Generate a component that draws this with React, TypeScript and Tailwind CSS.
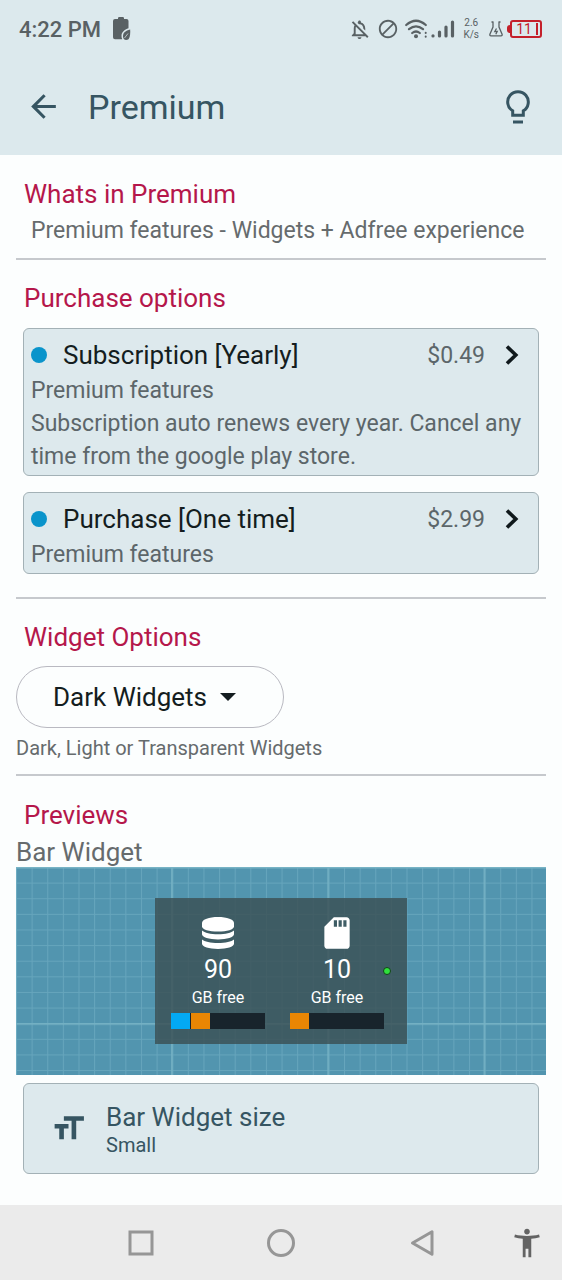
import { useState, type ReactNode } from "react";
import {
  MdAccessibilityNew,
  MdArrowBack,
  MdBlock,
  MdFormatSize,
  MdOutlineNotificationsOff,
  MdSdCard,
} from "react-icons/md";

type PurchaseOption = {
  id: string;
  title: string;
  price: string;
  lines: string[];
};

type Segment = { color: string; percent: number };

const PURCHASE_OPTIONS: PurchaseOption[] = [
  {
    id: "yearly",
    title: "Subscription [Yearly]",
    price: "$0.49",
    lines: [
      "Premium features",
      "Subscription auto renews every year. Cancel any time from the google play store.",
    ],
  },
  {
    id: "one-time",
    title: "Purchase [One time]",
    price: "$2.99",
    lines: ["Premium features"],
  },
];

const INTERNAL_USAGE: Segment[] = [
  { color: "#03a9f4", percent: 20 },
  { color: "#e98604", percent: 20 },
];

const SD_CARD_USAGE: Segment[] = [{ color: "#e98604", percent: 20 }];

function BatterySaverIcon() {
  return (
    <svg width="18" height="24" viewBox="0 0 18 24" fill="#596164" aria-hidden="true">
      <path d="M5 2V1.2Q5 0 6.2 0h3.6Q11 0 11 1.2V2h2.5Q15.500 2 15.500 4v7.2C11.500 12.500 8.500 15 8.500 19c0 1.200.2 2.200.8 3.200H2Q0 22.200 0 20.200V4Q0 2 2 2Z" />
      <path d="M17.200 12.500C12.500 13.500 10 15.800 10 19.200c0 2.300 1.200 3.800 3.200 3.800 3 0 4.300-3 4-10.500Z" />
      <path d="M11.500 21 15 16.500" stroke="#dce9ed" strokeWidth="0.700" />
    </svg>
  );
}

function WifiIcon() {
  return (
    <svg width="24" height="20" viewBox="0 0 24 20" fill="none" stroke="#596164" strokeLinecap="round" aria-hidden="true">
      <path d="M1.200 6Q11 -2.500 20.800 6M4 10.200q7-5.800 14 0M7.200 14q3.800-3 7.600 0" strokeWidth="2.200" />
      <circle cx="11" cy="17.200" r="2" fill="#596164" stroke="none" />
      <path d="M20.700 13.800v.2M20.700 17.600v.2" strokeWidth="2" />
    </svg>
  );
}

function SignalIcon() {
  return (
    <svg width="24" height="18" viewBox="0 0 24 18" stroke="#596164" strokeWidth="3.200" strokeLinecap="round" aria-hidden="true">
      <path d="M2 15.800v.2M8.500 12v4M15 7v9M21.500 2v14" />
    </svg>
  );
}

function FlaskIcon() {
  return (
    <svg width="14" height="16" viewBox="0 0 14 16" fill="none" stroke="#596164" strokeWidth="1.300" aria-hidden="true">
      <path d="M2.500 1h2M9.500 1h2M4 1v5L1 13q-.6 1.800 1 1.800h10q1.600 0 1-1.800L10 6V1" />
      <path d="M7.500 7.500 5.800 10.500h2.400L6.800 13.200" />
    </svg>
  );
}

function BatteryIcon() {
  return (
    <span className="flex items-center" role="img" aria-label="Battery 11%">
      <span className="h-2 w-[3px] rounded-l-sm bg-[#c4202b]" />
      <span className="flex h-[18px] w-8 items-center justify-end gap-1 rounded-[3px] border-2 border-[#c4202b] px-0.5 text-[14px] leading-none text-[#c4202b]">
        11
        <span className="h-3 w-0.5 bg-[#c4202b]" />
      </span>
    </span>
  );
}

function LightbulbIcon() {
  return (
    <svg width="26" height="36" viewBox="0 0 26 36" fill="none" stroke="#365562" strokeWidth="3" aria-hidden="true">
      <path d="M7.700 26.200V21.800A10.300 10.300 0 1 1 18.300 21.800V26.200Z" />
      <path d="M8 33h10" />
    </svg>
  );
}

function DatabaseIcon() {
  return (
    <svg width="34" height="34" viewBox="0 0 34 34" fill="#ffffff" aria-hidden="true">
      <path d="M1 7c0-3.500 7-6 16-6s16 2.500 16 6v3.500c0 3-7 5-16 5s-16-2-16-5Z" />
      <path d="M1 14.500c2.500 2.400 8.500 3.700 16 3.700s13.500-1.300 16-3.700v3.800c0 3-7 5.200-16 5.200S1 21.300 1 18.300Z" />
      <path d="M1 23.500c2.500 2.300 8.500 3.500 16 3.500s13.500-1.200 16-3.500v4.300c0 3-7 5.200-16 5.200S1 30.800 1 27.800Z" />
    </svg>
  );
}

function StatusBar() {
  return (
    <div className="flex h-[58px] items-center pr-5 pl-[19px] text-[#596164]">
      <span className="text-[22px] font-medium">4:22 PM</span>
      <span className="ml-3">
        <BatterySaverIcon />
      </span>
      <div className="ml-auto flex items-center">
        <MdOutlineNotificationsOff size={23} />
        <MdBlock size={22} className="ml-1.5" />
        <span className="ml-1.5">
          <WifiIcon />
        </span>
        <span className="ml-0.5">
          <SignalIcon />
        </span>
        <span className="ml-2 text-center text-[10px] leading-3">
          2.6
          <br />
          K/s
        </span>
        <span className="ml-2.5 mr-1">
          <FlaskIcon />
        </span>
        <BatteryIcon />
      </div>
    </div>
  );
}

function SectionTitle({ children }: { children: ReactNode }) {
  return <h2 className="px-2 text-[26px] leading-8 text-[#b5174b]">{children}</h2>;
}

function Divider() {
  return <hr className="border-0 border-t-2 border-[#c6c9cd]" />;
}

function PurchaseCard({ option }: { option: PurchaseOption }) {
  return (
    <button
      type="button"
      className="block w-full rounded-md border border-[#a3b1b6] bg-[#dde9ed] px-[7px] pt-[9px] pb-0.5 text-left text-[23px] leading-[33px] text-[#5c666a]"
    >
      <span className="flex h-[34px] items-center">
        <span className="size-4 rounded-full bg-[#0a94cb]" />
        <span className="ml-4 text-[26px] text-[#141d20]">{option.title}</span>
        <span className="ml-auto">{option.price}</span>
        <svg className="mr-3 ml-5" width="14" height="20" viewBox="0 0 14 20" fill="none" aria-hidden="true">
          <path d="M2 1.500 10.800 10 2 18.500" stroke="#10191c" strokeWidth="3.600" />
        </svg>
      </span>
      <span className="block pt-0.5">
        {option.lines.map((line) => (
          <span key={line} className="block">
            {line}
          </span>
        ))}
      </span>
    </button>
  );
}

function StorageColumn({ icon, free, usage }: { icon: ReactNode; free: string; usage: Segment[] }) {
  return (
    <div className="flex w-[94px] flex-col items-center text-white">
      <div className="flex h-[34px] items-center">{icon}</div>
      <div className="mt-1 text-[25px] leading-8">{free}</div>
      <div className="mt-0.5 text-[16px] leading-5">GB free</div>
      <div className="mt-[5px] flex h-4 w-full gap-px bg-[#18242c]">
        {usage.map((segment) => (
          <span key={segment.color} style={{ width: `${segment.percent}%`, background: segment.color }} />
        ))}
      </div>
    </div>
  );
}

function BarWidgetPreview() {
  return (
    <div className="relative flex h-[208px] items-center justify-center bg-[#5295af]">
      {/* blueprint wallpaper */}
      <svg className="absolute inset-0 size-full" aria-hidden="true">
        <defs>
          <pattern id="minor" width="15.620" height="15.620" patternUnits="userSpaceOnUse">
            <path d="M0 .5H15.620M.5 0V15.620" stroke="#66a5bc" strokeWidth="1" />
          </pattern>
          <pattern id="major" x="-1" width="156.200" height="156.200" patternUnits="userSpaceOnUse">
            <path d="M0 .5H156.200M.5 0V156.200" stroke="#77b3c5" strokeWidth="2" />
          </pattern>
        </defs>
        <rect width="100%" height="100%" fill="url(#minor)" />
        <rect width="100%" height="100%" fill="url(#major)" />
      </svg>
      <div className="relative flex h-[146px] w-[252px] gap-[25px] bg-[#394d51]/80 pt-[18px] pl-4">
        <StorageColumn icon={<DatabaseIcon />} free="90" usage={INTERNAL_USAGE} />
        <StorageColumn icon={<MdSdCard size={38} />} free="10" usage={SD_CARD_USAGE} />
        <span className="absolute top-[69px] right-4 size-2 rounded-full border border-[#12401a] bg-[#2fe03c]" />
      </div>
    </div>
  );
}

function NavigationBar() {
  return (
    <nav className="mt-auto grid h-[75px] grid-cols-8 items-center justify-items-center bg-[#ebebeb]">
      <button type="button" aria-label="Recent apps" className="col-span-2 col-start-2">
        <svg width="26" height="26" viewBox="0 0 26 26" fill="none" stroke="#969696" strokeWidth="3">
          <path d="M2 2h22v22H2Z" />
        </svg>
      </button>
      <button type="button" aria-label="Home" className="col-span-2">
        <svg width="28" height="28" viewBox="0 0 28 28" fill="none" stroke="#969696" strokeWidth="3">
          <circle cx="14" cy="14" r="12.500" />
        </svg>
      </button>
      <button type="button" aria-label="Back" className="col-span-2">
        <svg width="24" height="28" viewBox="0 0 24 28" fill="none" stroke="#969696" strokeWidth="3">
          <path d="M22 2.800v22.400L2.500 14Z" strokeLinejoin="round" />
        </svg>
      </button>
      <button type="button" aria-label="Accessibility">
        <MdAccessibilityNew size={34} color="#636363" />
      </button>
    </nav>
  );
}

export default function App() {
  const [theme, setTheme] = useState("dark");

  return (
    <div className="flex min-h-screen flex-col bg-[#fcfefe] font-[Roboto,sans-serif]">
      <header className="bg-[#dce9ed]">
        <StatusBar />
        <div className="flex h-[97px] items-center px-[25px] text-[#365562]">
          <button type="button" aria-label="Back">
            <MdArrowBack size={37} />
          </button>
          <h1 className="ml-[26px] text-[34px] leading-none">Premium</h1>
          <button type="button" aria-label="Tips" className="ml-auto mr-1.5">
            <LightbulbIcon />
          </button>
        </div>
      </header>

      <main className="px-4 pt-[23px] pb-[31px]">
        <section className="pb-[11px]">
          <SectionTitle>Whats in Premium</SectionTitle>
          <p className="mt-[5px] px-[15px] text-[23px] leading-8 text-[#666b6d]">
            Premium features - Widgets + Adfree experience
          </p>
        </section>
        <Divider />

        <section className="pt-[22px] pb-[23px]">
          <SectionTitle>Purchase options</SectionTitle>
          <div className="mx-[7px] mt-3.5 flex flex-col gap-4">
            {PURCHASE_OPTIONS.map((option) => (
              <PurchaseCard key={option.id} option={option} />
            ))}
          </div>
        </section>
        <Divider />

        <section className="pt-[22px] pb-3.5">
          <SectionTitle>Widget Options</SectionTitle>
          <div className="relative mt-[13px] w-[268px]">
            <select
              value={theme}
              onChange={(e) => setTheme(e.target.value)}
              aria-label="Widget theme"
              aria-describedby="theme-hint"
              className="h-[62px] w-full appearance-none rounded-full border border-[#b9b9c1] bg-transparent pl-9 text-[26px] text-[#141d20]"
            >
              <option value="dark">Dark Widgets</option>
              <option value="light">Light Widgets</option>
              <option value="transparent">Transparent Widgets</option>
            </select>
            <svg
              className="pointer-events-none absolute top-[27px] right-12"
              width="16"
              height="8"
              viewBox="0 0 16 8"
              aria-hidden="true"
            >
              <path d="M0 0h16L8 8Z" fill="#141d20" />
            </svg>
          </div>
          <p id="theme-hint" className="mt-2 text-[20px] leading-6 text-[#666b6d]">
            Dark, Light or Transparent Widgets
          </p>
        </section>
        <Divider />

        <section className="pt-[23px]">
          <SectionTitle>Previews</SectionTitle>
          <h3 className="mt-1.5 text-[26px] leading-[30px] text-[#666b6d]">Bar Widget</h3>
          <BarWidgetPreview />
          <div className="mx-[7px] mt-2">
            <button
              type="button"
              className="flex h-[91px] w-full items-center rounded-md border border-[#a3b1b6] bg-[#dde9ed] pl-[26px] text-left text-[#365562]"
            >
              <MdFormatSize size={37} />
              <span className="ml-[19px]">
                <span className="block text-[26px] leading-8">Bar Widget size</span>
                <span className="block text-[20px] leading-6">Small</span>
              </span>
            </button>
          </div>
        </section>
      </main>

      <NavigationBar />
    </div>
  );
}
